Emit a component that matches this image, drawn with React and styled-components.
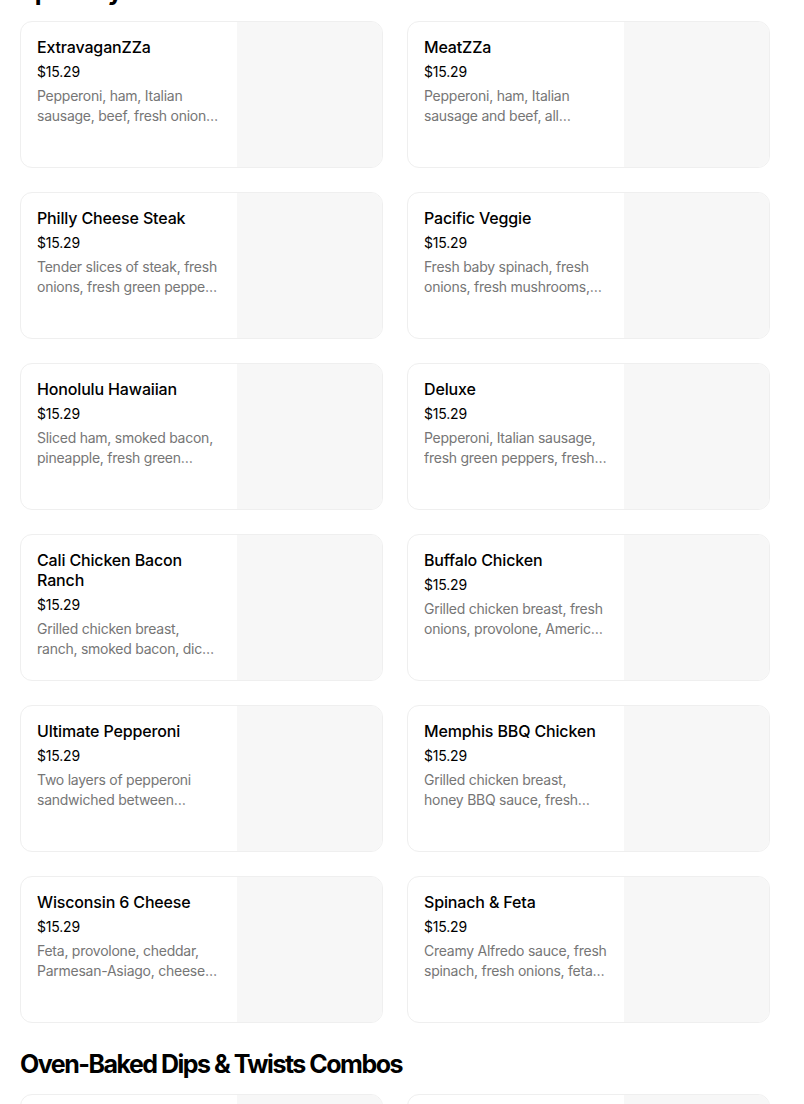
import React from 'react';
import styled, { createGlobalStyle } from 'styled-components';

const GlobalStyle = createGlobalStyle`
  body {
    margin: 0;
    background: #ffffff;
    font-family: Inter, "Liberation Sans", sans-serif;
    color: #000000;
  }
`;

const Page = styled.div`
  width: 750px;
  padding: 0 20px;
  margin-top: -26px;
`;

const Section = styled.section`
  & + & {
    margin-top: 24px;
  }
`;

const SectionTitle = styled.h2`
  margin: 0 0 13px;
  font-size: 25px;
  line-height: 34px;
  font-weight: 700;
  letter-spacing: -1.5px;
  color: #000;
`;

const Grid = styled.div`
  display: grid;
  grid-template-columns: 1fr 1fr;
  gap: 24px;
`;

const Card = styled.div`
  display: flex;
  border: 1px solid #efefef;
  border-radius: 12px;
  overflow: hidden;
  background: #fff;
  height: 145px;
`;

const Info = styled.div`
  flex: 1;
  min-width: 0;
  padding: 15px 16px;
`;

const Name = styled.div`
  font-size: 16px;
  line-height: 20px;
  font-weight: 500;
  letter-spacing: -0.15px;
  color: #000;
`;

const Price = styled.div`
  margin-top: 5px;
  font-size: 14px;
  line-height: 20px;
  letter-spacing: -0.2px;
  color: #000;
`;

const Desc = styled.div`
  margin-top: 4px;
  font-size: 14px;
  line-height: 20px;
  letter-spacing: -0.25px;
  color: #767676;
  display: -webkit-box;
  -webkit-line-clamp: 2;
  -webkit-box-orient: vertical;
  overflow: hidden;
`;

const Thumb = styled.div`
  width: 145px;
  flex-shrink: 0;
  background: #f7f7f7;
`;

const specialty = [
  ['ExtravaganZZa', 'Pepperoni, ham, Italian sausage, beef, fresh onions, fresh green peppers, fresh mushrooms, black olives'],
  ['MeatZZa', 'Pepperoni, ham, Italian sausage and beef, all sandwiched between provolone and mozzarella'],
  ['Philly Cheese Steak', 'Tender slices of steak, fresh onions, fresh green peppers, fresh mushrooms, provolone and American cheese'],
  ['Pacific Veggie', 'Fresh baby spinach, fresh onions, fresh mushrooms, tomatoes, black olives, feta, provolone'],
  ['Honolulu Hawaiian', 'Sliced ham, smoked bacon, pineapple, fresh green peppers, provolone and mozzarella'],
  ['Deluxe', 'Pepperoni, Italian sausage, fresh green peppers, fresh mushrooms and fresh onions'],
  ['Cali Chicken Bacon Ranch', 'Grilled chicken breast, ranch, smoked bacon, diced tomatoes, provolone and mozzarella'],
  ['Buffalo Chicken', 'Grilled chicken breast, fresh onions, provolone, American cheese, cheddar, mozzarella'],
  ['Ultimate Pepperoni', 'Two layers of pepperoni sandwiched between provolone, Parmesan-Asiago and mozzarella'],
  ['Memphis BBQ Chicken', 'Grilled chicken breast, honey BBQ sauce, fresh onions, provolone and cheddar'],
  ['Wisconsin 6 Cheese', 'Feta, provolone, cheddar, Parmesan-Asiago, cheese made with 100% real mozzarella'],
  ['Spinach & Feta', 'Creamy Alfredo sauce, fresh spinach, fresh onions, feta, Parmesan-Asiago and provolone'],
];

const combos = [
  ['Dips & Twists Combo', 'Parmesan Bread Twists or Cinnamon Bread Twists with dipping cups'],
  ['Cheesy Dip Combo', 'Oven-baked cheesy dip served with bread twists'],
];

const ItemCard = ({ name, desc }) => (
  <Card>
    <Info>
      <Name>{name}</Name>
      <Price>$15.29</Price>
      <Desc>{desc}</Desc>
    </Info>
    <Thumb />
  </Card>
);

const App = () => (
  <>
    <GlobalStyle />
    <Page>
      <Section>
        <SectionTitle>Specialty Pizzas</SectionTitle>
        <Grid>
          {specialty.map(([name, desc]) => (
            <ItemCard key={name} name={name} desc={desc} />
          ))}
        </Grid>
      </Section>
      <Section>
        <SectionTitle>Oven-Baked Dips &amp; Twists Combos</SectionTitle>
        <Grid>
          {combos.map(([name, desc]) => (
            <ItemCard key={name} name={name} desc={desc} />
          ))}
        </Grid>
      </Section>
    </Page>
  </>
);

export default App;
